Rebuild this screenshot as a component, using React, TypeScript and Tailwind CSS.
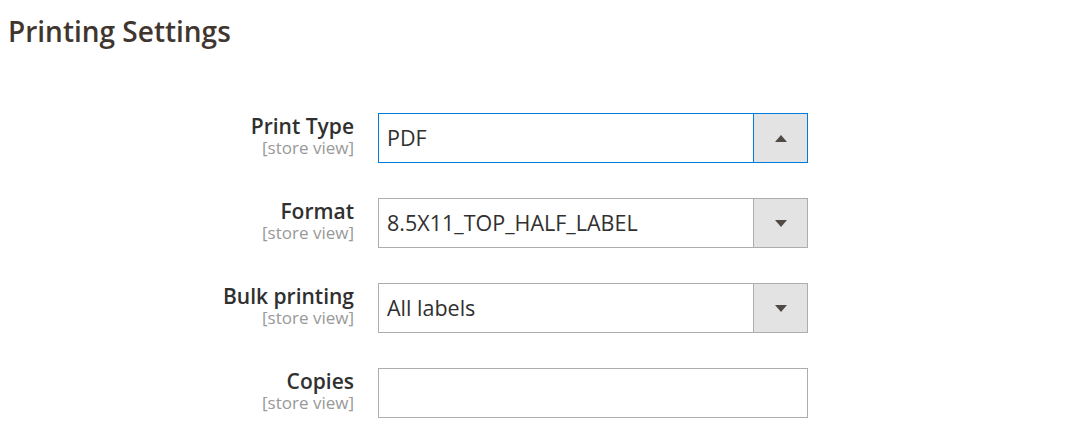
import React from 'react'

type Field = {
  label: string
  value?: string
  kind: 'select' | 'text'
  open?: boolean
}

const fields: Field[] = [
  { label: 'Print Type', value: 'PDF', kind: 'select', open: true },
  { label: 'Format', value: '8.5X11_TOP_HALF_LABEL', kind: 'select' },
  { label: 'Bulk printing', value: 'All labels', kind: 'select' },
  { label: 'Copies', kind: 'text' },
]

function Arrow({ up }: { up?: boolean }) {
  return up ? (
    <span className="h-0 w-0 border-x-[6px] border-b-[7px] border-x-transparent border-b-[#514943]" />
  ) : (
    <span className="h-0 w-0 border-x-[6px] border-t-[7px] border-x-transparent border-t-[#514943]" />
  )
}

export default function App() {
  return (
    <div
      className="min-h-screen bg-white text-[#303030]"
      style={{ fontFamily: '"Open Sans", "Noto Sans", sans-serif' }}
    >
      {/* Section title */}
      <h2 className="pl-2 pt-[14px] text-[28px] leading-[34px] font-semibold text-[#41362f]">
        Printing Settings
      </h2>

      {/* Fields */}
      <div className="mt-[65px] grid grid-cols-[354px_430px] gap-x-6 gap-y-[35px]">
        {fields.map((f) => (
          <React.Fragment key={f.label}>
            <div className="flex flex-col items-end pt-[1px]">
              <span className="text-[21px] leading-[24px] font-semibold text-[#303030]">
                {f.label}
              </span>
              <span className="text-[17px] leading-[20px] text-[#999999]">[store view]</span>
            </div>
            {f.kind === 'select' ? (
              <div
                className={`flex h-[50px] border bg-white ${
                  f.open ? 'border-[#007bdb]' : 'border-[#adadad]'
                }`}
              >
                <div className="flex flex-1 items-center pl-2 text-[21.5px] text-[#303030]">
                  {f.value}
                </div>
                <div
                  className={`flex w-[54px] items-center justify-center border-l bg-[#e3e3e3] ${
                    f.open ? 'border-[#007bdb]' : 'border-[#adadad]'
                  }`}
                >
                  <Arrow up={f.open} />
                </div>
              </div>
            ) : (
              <div className="h-[50px] border border-[#adadad] bg-white" />
            )}
          </React.Fragment>
        ))}
      </div>
    </div>
  )
}
